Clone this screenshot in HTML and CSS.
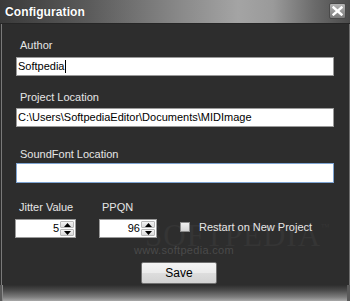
FILE: index.html
```html
<!DOCTYPE html>
<html>
<head>
<meta charset="utf-8">
<link rel="stylesheet" href="styles.css">
</head>
<body>
<div class="window">
  <div class="titlebar">
    <span class="title">Configuration</span>
    <span class="close"><svg width="11" height="10" viewBox="0 0 11 10"><path d="M1.5 1.5 L9.5 8.5 M9.5 1.5 L1.5 8.5" stroke="#fff" stroke-width="2.4" stroke-linecap="square"/></svg></span>
  </div>
  <div class="body">
    <div class="wm-big">SOFTPEDIA<sup>™</sup></div>
    <div class="wm-small">www.softpedia.com</div>

    <label class="lbl lbl-author">Author</label>
    <div class="field field-author">Softpedia<span class="caret"></span></div>

    <label class="lbl lbl-project">Project Location</label>
    <div class="field field-project">C:\Users\SoftpediaEditor\Documents\MIDImage</div>

    <label class="lbl lbl-sound">SoundFont Location</label>
    <div class="field field-sound focus"></div>

    <div class="row">
      <div class="col col-jitter">
        <label class="lbl lbl-small">Jitter Value</label>
        <div class="spin spin-jitter"><span class="val">5</span><span class="arrows"><span class="arr up"><svg width="7" height="4" viewBox="0 0 7 4"><path d="M0 4 L3.5 0 L7 4Z" fill="#000"/></svg></span><span class="arr down"><svg width="7" height="4" viewBox="0 0 7 4"><path d="M0 0 L3.5 4 L7 0Z" fill="#000"/></svg></span></span></div>
      </div>
      <div class="col col-ppqn">
        <label class="lbl lbl-small">PPQN</label>
        <div class="spin spin-ppqn"><span class="val">96</span><span class="arrows"><span class="arr up"><svg width="7" height="4" viewBox="0 0 7 4"><path d="M0 4 L3.5 0 L7 4Z" fill="#000"/></svg></span><span class="arr down"><svg width="7" height="4" viewBox="0 0 7 4"><path d="M0 0 L3.5 4 L7 0Z" fill="#000"/></svg></span></span></div>
      </div>
      <div class="check">
        <span class="box"></span>
        <span class="check-lbl">Restart on New Project</span>
      </div>
    </div>

    <div class="actions">
      <button class="save">Save</button>
    </div>
  </div>
  <div class="footer"></div>
</div>
</body>
</html>
```

FILE: styles.css
```css
html, body {
  margin: 0;
  padding: 0;
  background: #2d2d2d;
}
.window {
  width: 350px;
  height: 301px;
  display: flex;
  flex-direction: column;
  font-family: "Liberation Sans", Arial, sans-serif;
  font-size: 11px;
  overflow: hidden;
  background: #2d2d2d;
}
.titlebar {
  height: 24px;
  flex: none;
  display: flex;
  align-items: center;
  justify-content: space-between;
  padding: 0 4px 0 5px;
  background: linear-gradient(to right, #3a3a3a 0%, #5a5a5a 25%, #8a8a8a 52%, #a4a4a4 68%, #9a9a9a 78%, #6a6a6a 90%, #4a4a4a 100%);
  border-bottom: 1px solid #262626;
  box-sizing: border-box;
}
.title {
  color: #fff;
  font-weight: bold;
  font-size: 12px;
  letter-spacing: 0.1px;
  text-shadow: 0 0 1px rgba(0,0,0,0.4);
}
.close {
  width: 17px;
  height: 16px;
  box-sizing: border-box;
  border: 1px solid #4a4a4a;
  border-radius: 2px;
  background: linear-gradient(#b4b4b4, #7a7a7a);
  display: flex;
  align-items: center;
  justify-content: center;
  margin-top: -1px;
}
.body {
  flex: 1;
  position: relative;
  display: flex;
  flex-direction: column;
  padding: 0 13px 0 13px;
  border-left: 3px solid #2d2d2d;
  border-right: 3px solid #2d2d2d;
  background: #2d2d2d;
}
.body::before, .body::after {
  content: "";
  position: absolute;
  top: 0;
  bottom: 0;
  width: 1px;
  background: #7a7a7a;
}
.body::before { left: -2px; }
.body::after { right: -3px; background: #6e6e6e; }
.lbl {
  display: block;
  color: #e6e6e6;
  line-height: 14px;
  height: 14px;
  padding-left: 4px;
  position: relative;
}
.lbl-author { margin-top: 14px; }
.lbl-project { margin-top: 14px; }
.lbl-sound { margin-top: 20px; }
.field {
  box-sizing: border-box;
  height: 19px;
  background: #fff;
  border: 1px solid #9a9a9a;
  color: #000;
  line-height: 17px;
  padding-left: 1px;
  white-space: nowrap;
  overflow: hidden;
  position: relative;
}
.field-author { margin-top: 5px; }
.field-project { margin-top: 4px; }
.field-sound { margin-top: 2px; height: 20px; }
.field.focus { border-color: #7ea4d2; }
.caret {
  display: inline-block;
  width: 1px;
  height: 13px;
  background: #000;
  vertical-align: -3px;
  margin-left: 1px;
}
.row {
  display: flex;
  margin-top: 17px;
  position: relative;
}
.col {
  display: flex;
  flex-direction: column;
}
.col-jitter { margin-left: -1px; }
.col-ppqn { margin-left: 23px; }
.lbl-small { padding-left: 4px; }
.col-ppqn .lbl-small { padding-left: 3px; }
.spin {
  margin-top: 5px;
  box-sizing: border-box;
  height: 19px;
  background: #fff;
  border: 1px solid #9a9a9a;
  display: flex;
  align-items: stretch;
  color: #000;
}
.spin-jitter { width: 61px; }
.spin-ppqn { width: 58px; }
.val {
  flex: 1;
  text-align: right;
  line-height: 17px;
  padding-right: 1px;
}
.arrows {
  width: 14px;
  display: flex;
  flex-direction: column;
  padding: 1px 1px 1px 0;
  gap: 1px;
}
.arr {
  flex: 1;
  display: flex;
  align-items: center;
  justify-content: center;
  background: linear-gradient(#f4f4f4, #dadada);
  border: 1px solid #b8b8b8;
  border-radius: 1px;
}
.check {
  display: flex;
  align-items: center;
  align-self: flex-end;
  margin-left: 23px;
  margin-bottom: 4px;
}
.box {
  width: 10px;
  height: 10px;
  box-sizing: border-box;
  background: linear-gradient(#f0f0f0, #d4d4d4);
  border: 1px solid #8a8a8a;
}
.check-lbl {
  color: #e6e6e6;
  margin-left: 9px;
  line-height: 14px;
}
.actions {
  display: flex;
  justify-content: center;
  margin-top: 24px;
  position: relative;
}
.save {
  width: 76px;
  height: 22px;
  margin-left: 8px;
  box-sizing: border-box;
  border: 1px solid #707070;
  border-radius: 2px;
  background: linear-gradient(#f4f4f4 0%, #ebebeb 48%, #dddddd 52%, #d2d2d2 100%);
  font-family: "Liberation Sans", Arial, sans-serif;
  font-size: 12px;
  color: #000;
  padding: 0;
}
.footer {
  height: 16px;
  flex: none;
  background: linear-gradient(#2d2d2d 0%, #4c4c4c 35%, #7c7c7c 75%, #a8a8a8 100%);
  border-left: 2px solid #5a5a5a;
  border-right: 3px solid #5a5a5a;
  box-shadow: inset 1px 0 0 #8a8a8a;
}
.wm-big {
  position: absolute;
  left: 142px;
  top: 187px;
  font-family: "Liberation Serif", serif;
  font-size: 31px;
  line-height: 32px;
  letter-spacing: 1px;
  color: #353535;
  pointer-events: none;
}
.wm-big sup {
  font-size: 9px;
  vertical-align: 16px;
}
.wm-small {
  position: absolute;
  left: 131px;
  top: 220px;
  font-family: "Liberation Sans", Arial, sans-serif;
  font-size: 11px;
  letter-spacing: 0.3px;
  color: #4a4a4a;
  pointer-events: none;
}
```
